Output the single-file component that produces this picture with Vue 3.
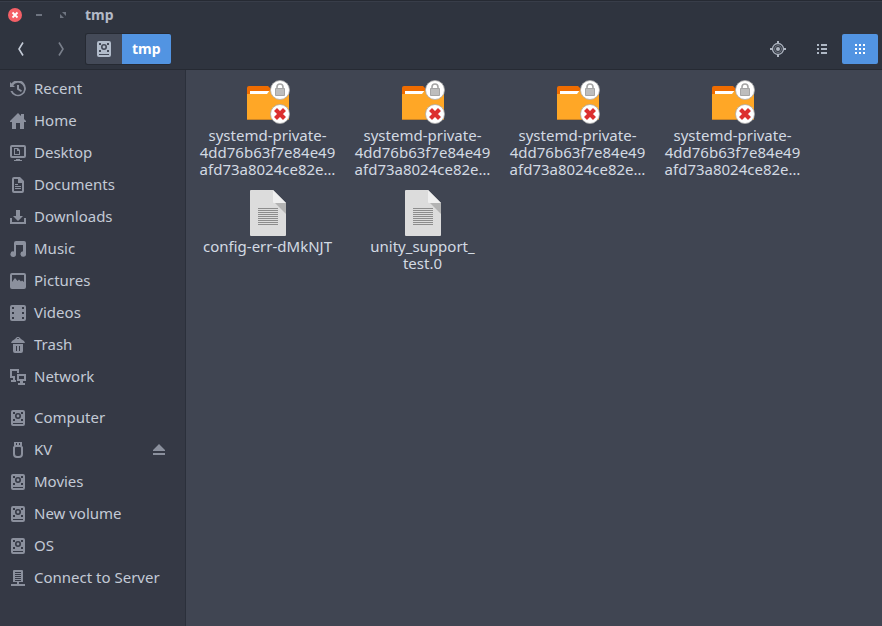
<script setup>
import { ref } from 'vue'

const places = [
  { icon: 'recent', label: 'Recent' },
  { icon: 'home', label: 'Home' },
  { icon: 'desktop', label: 'Desktop' },
  { icon: 'document', label: 'Documents' },
  { icon: 'download', label: 'Downloads' },
  { icon: 'music', label: 'Music' },
  { icon: 'picture', label: 'Pictures' },
  { icon: 'video', label: 'Videos' },
  { icon: 'trash', label: 'Trash' },
  { icon: 'network', label: 'Network' },
]
const devices = [
  { icon: 'disk', label: 'Computer' },
  { icon: 'usb', label: 'KV', ejectable: true },
  { icon: 'disk', label: 'Movies' },
  { icon: 'disk', label: 'New volume' },
  { icon: 'disk', label: 'OS' },
  { icon: 'server', label: 'Connect to Server' },
]
const groups = [places, devices]

const lockedName = 'systemd-private-\n4dd76b63f7e84e49\nafd73a8024ce82e…'
const files = [
  { kind: 'folder', name: lockedName },
  { kind: 'folder', name: lockedName },
  { kind: 'folder', name: lockedName },
  { kind: 'folder', name: lockedName },
  { kind: 'file', name: 'config-err-dMkNJT' },
  { kind: 'file', name: 'unity_support_\ntest.0' },
]

const diskPath =
  'M3 0H13Q15 0 15 2V14Q15 16 13 16H3Q1 16 1 14V2Q1 0 3 0ZM3 2V4H5V2ZM11 2V4H13V2ZM3 9V11H5V9ZM11 9V11H13V9ZM3 13V14H13V13ZM8 3A3 3 0 1 0 8 9A3 3 0 1 0 8 3ZM8 4.600A1.400 1.400 0 1 1 8 7.400A1.400 1.400 0 1 1 8 4.600Z'
const glyphs = {
  recent:
    'M0 1L1.500 2.500A8 8 0 1 1 .4 10H2.500A6 6 0 1 0 3.200 4.300L5 6H0ZM7 4H9V7.500L12 9.500L11 11L7 8.500Z',
  home: 'M8 0L11 3V1H14V6L16 8V9H14V16H10V10H6V16H2V9H0V8Z',
  desktop:
    'M2 0H14Q16 0 16 2V11Q16 13 14 13H2Q0 13 0 11V2Q0 0 2 0ZM2 2V11H14V2ZM4 3H8L10 5V10H4ZM5 4V9H9V6H7V4ZM6 14H10V15H12V16H4V15H6Z',
  document:
    'M4 0H10L14 4V14Q14 16 12 16H4Q2 16 2 14V2Q2 0 4 0ZM4 2V14H12V6H8V2ZM5 7H8V8H5ZM5 9H11V10H5ZM5 11H11V12H5Z',
  download: 'M6 1H10V7H13L8 12L3 7H6ZM0 9H2V13H14V9H16V15H0Z',
  music:
    'M6 0H14Q16 0 16 2V12.500A2.800 2.800 0 1 1 13 10.200V4H6V13.200A2.800 2.800 0 1 1 4 10.500V2Q4 0 6 0Z',
  picture:
    'M2 0H14Q16 0 16 2V14Q16 16 14 16H2Q0 16 0 14V2Q0 0 2 0ZM2 2V9L5 5L7.500 8L9 6.500L11 8.500L12 7.500L14 9V2Z',
  video:
    'M2 0H14Q16 0 16 2V14Q16 16 14 16H2Q0 16 0 14V2Q0 0 2 0ZM2 2V4H4V2ZM2 7V9H4V7ZM2 12V14H4V12ZM12 2V4H14V2ZM12 7V9H14V7ZM12 12V14H14V12Z',
  trash:
    'M5 2L7 0H9L11 2L14 4L15 6H1L2 4ZM7 2H9V1.300H7ZM3 7H13V14Q13 16 11 16H5Q3 16 3 14ZM6 9V14H7V9ZM9 9V14H10V9Z',
  network:
    'M0 0H9V4H7V2H2V7H5V9H0ZM3 9H5V11H6V13H1V11H3ZM7 5H16V12H13V14H15V16H8V14H10V12H7ZM9 7V10H14V7Z',
  disk: diskPath,
  usb: 'M4 0H12V4L13 5V12Q13 16 9 16H7Q3 16 3 12V5L4 4ZM6 1V3H7V1ZM9 1V3H10V1ZM6 5Q5 5 5 6V12Q5 14 7 14H9Q11 14 11 12V6Q11 5 10 5Z',
  server:
    'M4 0H12Q13 0 13 1V12H9V14H15V16H1V14H7V12H3V1Q3 0 4 0ZM5 2V3H11V2ZM5 4V5H11V4ZM5 6V7H11V6ZM5 8V9H11V8ZM5 10V11H11V10Z',
}

const view = ref('grid')
</script>

<template>
  <div class="window">
    <header class="header">
      <div class="titlebar">
        <button class="wm close" aria-label="Close">
          <svg width="14" height="14" viewBox="0 0 14 14">
            <circle cx="7" cy="7" r="7" fill="#f46067" />
            <path d="M4.500 4.500L9.500 9.500M9.500 4.500L4.500 9.500" stroke="#fff" stroke-width="1.800" />
          </svg>
        </button>
        <button class="wm" aria-label="Minimize">
          <svg width="14" height="14" viewBox="0 0 14 14"><path d="M4 6H10V8H4Z" fill="#6e7480" /></svg>
        </button>
        <button class="wm" aria-label="Maximize">
          <svg width="14" height="14" viewBox="0 0 14 14"><path d="M6 4H10V8ZM4 6L8 10H4Z" fill="#6e7480" /></svg>
        </button>
        <h1 class="title">tmp</h1>
      </div>
      <nav class="toolbar" aria-label="Toolbar">
        <button class="tool" aria-label="Back">
          <svg width="16" height="16" viewBox="0 0 16 16"><path d="M10 1.500L6 8L10 14.500" class="chev" /></svg>
        </button>
        <button class="tool forward" aria-label="Forward" disabled>
          <svg width="16" height="16" viewBox="0 0 16 16"><path d="M6 1.500L10 8L6 14.500" class="chev" /></svg>
        </button>
        <div class="pathbar">
          <button class="crumb root" aria-label="Computer">
            <svg width="16" height="16" viewBox="0 0 16 16"><path :d="diskPath" fill="#b2bccb" fill-rule="evenodd" /></svg>
          </button>
          <button class="crumb current">tmp</button>
        </div>
        <div class="actions">
          <button class="tool" aria-label="Enter location">
            <svg width="16" height="16" viewBox="0 0 16 16" fill="none" stroke="#aeb5c1">
              <circle cx="8" cy="8" r="5.500" stroke-width="1.300" />
              <circle cx="8" cy="8" r="3.500" stroke-width="1" opacity=".5" />
              <circle cx="8" cy="8" r="2" fill="#aeb5c1" stroke="none" />
              <path d="M8 0V3M8 13V16M0 8H3M13 8H16" stroke-width="2" />
            </svg>
          </button>
          <div class="views">
            <button class="tool" :class="{ active: view === 'list' }" aria-label="List view" @click="view = 'list'">
              <svg width="16" height="16" viewBox="0 0 16 16">
                <path d="M3 3H5V5H3ZM7 3H13V5H7ZM3 7H5V9H3ZM7 7H13V9H7ZM3 11H5V13H3ZM7 11H13V13H7Z" fill="currentColor" />
              </svg>
            </button>
            <button class="tool" :class="{ active: view === 'grid' }" aria-label="Icon view" @click="view = 'grid'">
              <svg width="16" height="16" viewBox="0 0 16 16">
                <path d="M3 3H5V5H3ZM7 3H9V5H7ZM11 3H13V5H11ZM3 7H5V9H3ZM7 7H9V9H7ZM11 7H13V9H11ZM3 11H5V13H3ZM7 11H9V13H7ZM11 11H13V13H11Z" fill="currentColor" />
              </svg>
            </button>
          </div>
        </div>
      </nav>
    </header>

    <div class="body">
      <aside class="sidebar">
        <ul v-for="(group, g) in groups" :key="g" class="group">
          <li v-for="item in group" :key="item.label" class="row">
            <a href="#" class="place">
              <svg width="16" height="16" viewBox="0 0 16 16"><path :d="glyphs[item.icon]" fill="#8b909d" fill-rule="evenodd" /></svg>
              <span class="label">{{ item.label }}</span>
            </a>
            <button v-if="item.ejectable" class="eject" aria-label="Eject">
              <svg width="12" height="12" viewBox="0 0 12 12"><path d="M6 0L12 6V7H0V6ZM0 9H12V11H0Z" fill="#8b909d" /></svg>
            </button>
          </li>
        </ul>
      </aside>

      <main class="files">
        <button v-for="(file, i) in files" :key="i" class="file">
          <svg v-if="file.kind === 'folder'" width="48" height="48" viewBox="0 0 48 48">
            <path d="M3 10Q3 8 5 8H24L27 11V20H3Z" fill="#ef6c00" />
            <path d="M6 13H25V16H6Z" fill="#fff" />
            <path d="M3 16H23L26 12H43Q45 12 45 14V42H3Z" fill="#ffa726" />
            <path d="M3 41H45V42H3Z" fill="#c9852a" />
            <circle cx="36" cy="12" r="9.500" fill="#fff" stroke="#a9a9a9" stroke-width=".8" />
            <path d="M33 11V9A3 3 0 0 1 39 9V11" fill="none" stroke="#a5a5a5" stroke-width="1.600" />
            <path d="M31.500 10.500H40.500V17.500H31.500Z" fill="#bdbdbd" stroke="#a5a5a5" />
            <circle cx="36" cy="36" r="9.500" fill="#fff" stroke="#a9a9a9" stroke-width=".8" />
            <path d="M33 33L39 39M39 33L33 39" stroke="#dc2f2f" stroke-width="4.200" stroke-linecap="square" />
          </svg>
          <svg v-else width="48" height="48" viewBox="0 0 48 48">
            <path d="M7 1H29L42 14V46Q42 47 41 47H7Q6 47 6 46V2Q6 1 7 1Z" fill="#dcdcdc" />
            <path d="M30 13L42 25V14Z" fill="#b3b3b3" />
            <path d="M29 1L42 14H30Q29 14 29 13Z" fill="#efefef" />
            <path d="M14 19.500H34M14 21.500H34M14 23.500H34M14 25.500H34M14 27.500H34M14 29.500H34M14 31.500H34M14 33.500H34M14 35.500H34" stroke="#8c8c8c" />
          </svg>
          <span class="name">{{ file.name }}</span>
        </button>
      </main>
    </div>
  </div>
</template>

<style>
body {
  margin: 0;
}
</style>

<style scoped>
.window {
  display: flex;
  flex-direction: column;
  box-sizing: border-box;
  min-height: 100vh;
  background: #404552;
  color: #d3dae3;
  font: 15px/17px "Noto Sans", "Open Sans", sans-serif;
}
button {
  margin: 0;
  padding: 0;
  border: 0;
  background: none;
  color: inherit;
  font: inherit;
}
svg {
  display: block;
  flex: none;
}
.header {
  box-sizing: border-box;
  height: 70px;
  border-top: 1px solid #262a33;
  border-bottom: 1px solid #262a33;
  background: #2f343f;
}
.titlebar {
  display: flex;
  align-items: center;
  gap: 10px;
  box-sizing: border-box;
  height: 26px;
  padding: 0 8px;
  border-top: 1px solid #383d49;
}
.title {
  margin: 0 0 0 5px;
  color: #b4bac6;
  font-size: 14px;
  font-weight: 700;
}
.toolbar {
  display: flex;
  align-items: center;
  gap: 4px;
  box-sizing: border-box;
  height: 42px;
  padding: 2px 4px 0 3px;
}
.tool {
  display: flex;
  align-items: center;
  justify-content: center;
  width: 36px;
  height: 30px;
  border-radius: 2px;
  color: #afb8c5;
}
.forward {
  opacity: 0.5;
}
.chev {
  fill: none;
  stroke: #c3cad6;
  stroke-width: 1.6;
}
.tool.active {
  background: #5294e2;
  color: #fff;
}
.pathbar {
  display: flex;
  margin-left: 2px;
  border: 1px solid #262a33;
  border-right: 0;
  border-radius: 3px;
  box-sizing: border-box;
  height: 32px;
}
.crumb {
  display: flex;
  align-items: center;
  justify-content: center;
}
.root {
  width: 36px;
  border-radius: 2px 0 0 2px;
  background: #444a58;
}
.current {
  padding: 0 10px 2px;
  border-radius: 0 2px 2px 0;
  background: #5294e2;
  color: #fff;
  font-size: 14px;
  font-weight: 700;
}
.actions {
  display: flex;
  gap: 8px;
  margin-left: auto;
}
.views {
  display: flex;
  gap: 2px;
}
.body {
  display: flex;
  flex: 1;
}
.sidebar {
  display: flex;
  flex-direction: column;
  gap: 9px;
  flex: none;
  box-sizing: border-box;
  width: 186px;
  padding: 3px 0;
  border-right: 1px solid #2b303b;
  background: #353945;
}
.group {
  margin: 0;
  padding: 0;
  list-style: none;
}
.row {
  display: flex;
  align-items: center;
  height: 32px;
  padding: 0 20px 0 10px;
}
.place {
  display: flex;
  align-items: center;
  flex: 1;
  gap: 8px;
  color: #c3cad6;
  text-decoration: none;
  white-space: nowrap;
}
.label {
  padding-bottom: 2px;
}
.files {
  display: grid;
  flex: 1;
  grid-template-columns: repeat(auto-fill, 155px);
  align-content: start;
  gap: 11px 0;
  padding: 8px 0 8px 4px;
}
.file {
  display: flex;
  flex-direction: column;
  align-items: center;
  gap: 1px;
}
.name {
  text-align: center;
  white-space: pre;
}
</style>
